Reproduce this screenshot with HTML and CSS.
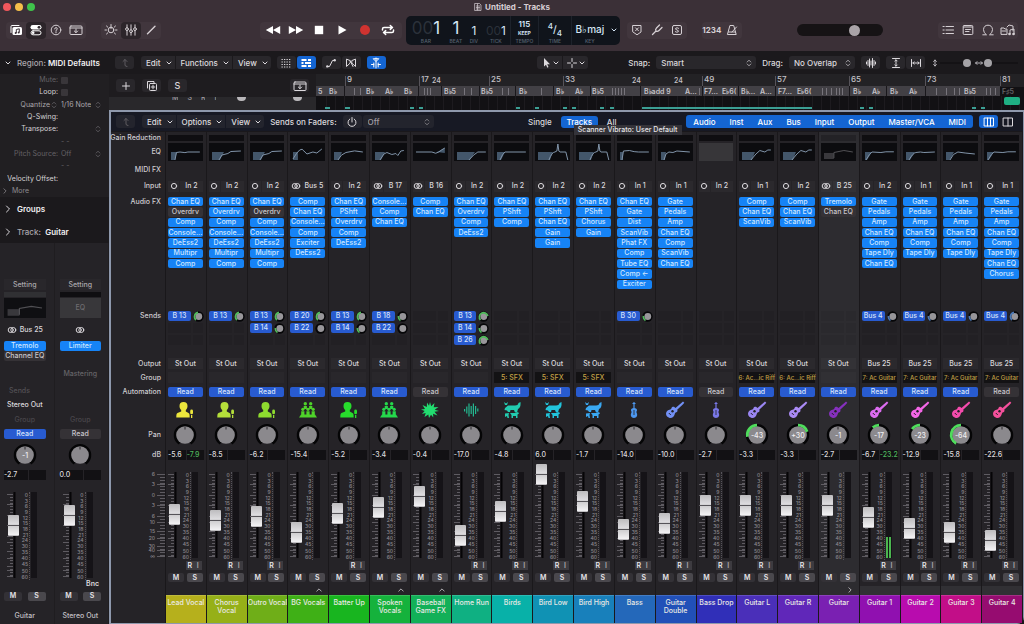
FILE: index.html
```html
<!DOCTYPE html>
<html lang="en">
<head>
<meta charset="utf-8">
<title>Untitled - Tracks</title>
<link rel="stylesheet" href="styles.css">
</head>
<body>
<svg class="defs" aria-hidden="true">
  <symbol id="i-down" viewBox="0 0 8 8"><path d="M2 3l2 2 2-2" class="ln"/></symbol>
  <symbol id="i-updown" viewBox="0 0 8 8"><path d="M2.200 3L4 1.200 5.800 3M2.200 5L4 6.800 5.800 5" class="ln thin"/></symbol>
  <symbol id="i-up" viewBox="0 0 12 12"><path d="M4 4.500L6 2.500l2 2M6 2.500V8q0 1.500 2 1.500" class="ln"/></symbol>
  <symbol id="i-chev" viewBox="0 0 8 8"><path d="M2.500 1L5.500 4 2.500 7" class="ln"/></symbol>
  <symbol id="i-library" viewBox="0 0 14 12"><path d="M2 8.500V2.500Q2 1.500 3 1.500h7" class="ln"/><rect x="3.500" y="3" width="9.500" height="8" rx="1.500" fill="currentColor"/><path d="M7.300 9V5.500l3-.7V8.300" stroke="#3b3037" fill="none"/><circle cx="6.700" cy="9" r="1" fill="#3b3037"/><circle cx="9.700" cy="8.400" r="1" fill="#3b3037"/></symbol>
  <symbol id="i-inspector" viewBox="0 0 14 12"><rect x="1.500" y="1" width="11" height="4.600" rx="2.300" fill="currentColor"/><rect x="2" y="6.800" width="10" height="4" rx="2" class="ln"/><circle cx="10" cy="3.300" r="1.400" fill="#2c252a"/><circle cx="4.200" cy="8.800" r="1.300" fill="currentColor"/></symbol>
  <symbol id="i-help" viewBox="0 0 14 12"><circle cx="7" cy="6" r="4.800" class="ln"/><path d="M5.700 4.900Q5.800 3.600 7 3.600t1.300 1.200Q8.300 5.700 7 6.400v.6M7 8v.8" class="ln"/></symbol>
  <symbol id="i-tray" viewBox="0 0 14 12"><rect x="1" y="2" width="12" height="8.500" rx="1" class="ln"/><path d="M1 4h12M7 5v3.500M5.300 7L7 8.700 8.700 7" class="ln"/></symbol>
  <symbol id="i-smart" viewBox="0 0 14 12"><circle cx="7" cy="6" r="2.800" class="ln"/><path d="M7 .5v4M2.500 2l1.300 1.200M11.500 2l-1.300 1.200M1 6h1.500M11.500 6H13M2.500 10l1.300-1.200M11.500 10l-1.300-1.200" class="ln"/></symbol>
  <symbol id="i-mixer" viewBox="0 0 14 12"><path d="M3 .8v3M3 6.500v4.700M7 .8v5M7 8.500v2.700M11 .8v3M11 6.500v4.700" class="ln"/><circle cx="3" cy="5.100" r="1.400" class="ln"/><circle cx="7" cy="7.200" r="1.400" class="ln"/><circle cx="11" cy="5.100" r="1.400" class="ln"/></symbol>
  <symbol id="i-pencil" viewBox="0 0 14 12"><path d="M3.500 9.800L11 2.200" class="ln" stroke-width="1.400"/></symbol>
  <symbol id="i-rew" viewBox="0 0 16 12"><path d="M8 2v8L.8 6zM15.200 2v8L8 6z" fill="currentColor"/></symbol>
  <symbol id="i-fwd" viewBox="0 0 16 12"><path d="M8 2v8l7.200-4zM.8 2v8L8 6z" fill="currentColor"/></symbol>
  <symbol id="i-stop" viewBox="0 0 12 12"><path d="M1.800 1.800h8.400v8.400H1.800z" fill="currentColor"/></symbol>
  <symbol id="i-play" viewBox="0 0 12 12"><path d="M2.500 1.500v9L10.500 6z" fill="currentColor"/></symbol>
  <symbol id="i-rec" viewBox="0 0 12 12"><circle cx="6" cy="6" r="5" fill="#cf3330"/></symbol>
  <symbol id="i-cycle" viewBox="0 0 14 12"><path d="M1.500 6V5q0-1.500 1.500-1.500h8M9.300 1.500L11.500 3.500 9.300 5.400M12.500 6v1q0 1.500-1.500 1.500H3M4.700 6.600L2.500 8.500l2.200 2" class="ln" stroke-width="1.500"/></symbol>
  <symbol id="i-replace" viewBox="0 0 12 12"><path d="M2 1.500h8v6.500L6 10.800 2 8zM4.500 3.800l3 3M7.500 3.800l-3 3" class="ln"/></symbol>
  <symbol id="i-tuner" viewBox="0 0 12 12"><path d="M1.500 10.500L5 7M5 7q-1-1.500.5-3L8.500 1M5 7q1.500 1 3-.5L11 3.500" class="ln" stroke-width="1.300"/></symbol>
  <symbol id="i-solo" viewBox="0 0 12 12"><rect x="1.500" y="1.500" width="9" height="9" rx="1.500" class="ln"/><path d="M7.600 4.300Q6 3.200 4.800 4.200T6 6t1.200 1.800T4.400 7.700" class="ln"/></symbol>
  <symbol id="i-metro" viewBox="0 0 12 12"><path d="M4.300 1.500h3.400l2.500 9H1.800zM2.500 8h7M6 8l4.500-5" class="ln"/></symbol>
  <symbol id="i-list" viewBox="0 0 12 12"><path d="M4 2.500h7.500M4 6h7.500M4 9.500h7.500M1 2.500h1.200M1 6h1.200M1 9.500h1.200" class="ln"/></symbol>
  <symbol id="i-note" viewBox="0 0 12 12"><rect x="1.200" y="1.500" width="9.600" height="9" rx="1" class="ln"/><path d="M1.500 3h9M3.500 5.500h5M3.500 7.500h3.500" class="ln"/></symbol>
  <symbol id="i-loop" viewBox="0 0 12 12"><path d="M.8 10.800h3.700Q1.500 9 1.500 5.500 2 1.200 6 1.200t4.500 4.300q0 3.500-3 5.300h3.700" class="ln"/></symbol>
  <symbol id="i-media" viewBox="0 0 16 12"><path d="M1 10V4h3l1 1h2v5zM7 3l2-2 4 1v5M2 7h4" class="ln"/><path d="M10 10V6l4-1v5" class="ln"/><circle cx="9.500" cy="10" r="1.300" fill="currentColor"/><circle cx="13.500" cy="10" r="1.300" fill="currentColor"/></symbol>
  <symbol id="i-grid" viewBox="0 0 12 12"><path d="M1.500 2.500h9M1.500 5h9M1.500 7.500h9M1.500 10h9" fill="none" stroke="currentColor" stroke-dasharray="1.300 1.200" stroke-width="1.200"/></symbol>
  <symbol id="i-tracks" viewBox="0 0 12 12"><path d="M1.500 3h5M8 3h3M1.500 6h2M5 6h6M1.500 9h5M8 9h3" fill="none" stroke="currentColor" stroke-width="1.800"/></symbol>
  <symbol id="i-auto" viewBox="0 0 12 12"><path d="M2.500 9.500h2l3-6h2" class="ln"/><circle cx="2.300" cy="9.400" r="1.200" fill="currentColor"/><circle cx="9.700" cy="3.300" r="1.200" fill="currentColor"/></symbol>
  <symbol id="i-flex" viewBox="0 0 12 12"><path d="M1.500 2.500v7L5.200 6V4zM10.500 2.500v7L6.800 6V4zM5.200 4L8 9.500M6.800 4" class="ln"/></symbol>
  <symbol id="i-catch" viewBox="0 0 12 12"><path d="M6 1v10M3.500 2L6 4.500 8.500 2zM1.500 7.500h2.300M8.200 7.500h2.300M3.800 6v4M8.200 6v4" class="ln"/></symbol>
  <symbol id="i-pointer" viewBox="0 0 12 12"><path d="M4 1v8.500l2-1.800 1.300 3 1.200-.6L7.200 7.300H10z" fill="currentColor"/></symbol>
  <symbol id="i-cross" viewBox="0 0 12 12"><path d="M6 1.500v3M6 7.500v3M1.500 6h3M7.500 6h3" class="ln"/></symbol>
  <symbol id="i-wave" viewBox="0 0 12 12"><path d="M1.500 5v2M3 3.500v5M4.500 2v8M6 4v4M7.500 1.500v9M9 3.500v5M10.500 5v2" class="ln"/></symbol>
  <symbol id="i-vfit" viewBox="0 0 12 12"><path d="M2.500 1.500h7M2.500 10.500h7M6 3v6M4.800 4L6 2.800 7.200 4M4.800 8L6 9.200 7.200 8" class="ln"/></symbol>
  <symbol id="i-hfit" viewBox="0 0 12 12"><path d="M1.500 2.500v7M10.500 2.500v7M3 6h6M4 4.800L2.800 6 4 7.200M8 4.800L9.200 6 8 7.200" class="ln"/></symbol>
  <symbol id="i-varr" viewBox="0 0 8 8"><path d="M4 1v6M2.600 2.400L4 1l1.400 1.400M2.600 5.600L4 7l1.400-1.400" class="ln"/></symbol>
  <symbol id="i-harr" viewBox="0 0 8 8"><path d="M.6 4h6.800M2 2.600L.6 4 2 5.400M6 2.600L7.400 4 6 5.400" class="ln"/></symbol>
  <symbol id="i-plus" viewBox="0 0 12 12"><path d="M6 2.500v7M2.500 6h7" class="ln"/></symbol>
  <symbol id="i-dup" viewBox="0 0 12 12"><path d="M1.500 8V1.500H8V3" class="ln"/><rect x="3.500" y="3.500" width="7" height="7" rx="1" class="ln"/><path d="M7 5.200v3.600M5.200 7h3.600" class="ln"/></symbol>
  <symbol id="i-power" viewBox="0 0 12 12"><path d="M6 1.500V6M3.800 3A4 4 0 1 0 8.200 3" class="ln"/></symbol>
  <symbol id="i-three" viewBox="0 0 12 12"><path d="M1.500 2h9v8h-9zM4.500 2v8M7.500 2v8" class="ln"/></symbol>
  <symbol id="i-two" viewBox="0 0 12 12"><path d="M1.500 2h9v8h-9zM6 2v8" class="ln"/></symbol>
  <symbol id="i-mono" viewBox="0 0 10 8"><circle cx="5" cy="4" r="2.600" class="ln"/></symbol>
  <symbol id="i-stereo" viewBox="0 0 10 8"><circle cx="3.700" cy="4" r="2.500" class="ln"/><circle cx="6.300" cy="4" r="2.500" class="ln"/></symbol>
  <symbol id="i-doc" viewBox="0 0 8 8"><path d="M1 .5h4.500L7 2v5.500H1zM2.300 3h3.400M2.300 4.500h3.400M2.300 6h3.400M3.500 1v6" class="ln thin"/></symbol>

  <symbol id="t-singer" viewBox="0 0 20 18"><path d="M8.500 1C5.800 1 4.500 2.600 4.500 5c0 1.700.6 3 1.700 3.900v1.500L2.500 12C1.600 12.500 1.300 13.500 1.300 16.500h13.400c0-3-.2-4-1.200-4.500l-2.700-1.600V8.900C11.900 8 12.500 6.700 12.500 5c0-2.400-1.300-4-4-4z"/><rect x="15.200" y="8.500" width="2.800" height="4.800" rx="1.400"/><path d="M16 14h1.300v3H16z"/></symbol>
  <symbol id="t-choir" viewBox="0 0 20 18"><circle cx="7.300" cy="2.800" r="1.700"/><circle cx="12.700" cy="2.800" r="1.700"/><path d="M5.700 5h3.200v3H5.700zM11.100 5h3.200v3h-3.200z"/><circle cx="4.800" cy="8.300" r="1.600"/><circle cx="10" cy="8.300" r="1.600"/><circle cx="15.200" cy="8.300" r="1.600"/><path d="M3.200 10.200h3.200V14H3.200zM8.400 10.200h3.200V14H8.400zM13.600 10.200h3.200V14h-3.200zM3 13.500h14l2 3H1z"/></symbol>
  <symbol id="t-burst" viewBox="0 0 20 18"><path d="M10 1l1.200 4.200L14.500 2l-.8 4.300L18.500 6l-3.800 2.700L19 10l-4.500.8 3 3.700-4.400-1.700.2 3.700-2.300-2.800L9 17l-.7-3.600L4.500 16l1.200-4L2 13l2.600-3L1 8.500l4-.6L2.500 4l4.300 2L7 1.500l2 3.200z"/></symbol>
  <symbol id="t-wave" viewBox="0 0 20 18"><path d="M3 8h1.200v2.500H3zM5.200 5.500h1.200v7H5.200zM7.400 2.500h1.200v13H7.400zM9.600 5h1.200v8H9.600zM11.800 2.500H13v13h-1.200zM14 5h1.200v8H14zM16.200 7.500h1.200v3h-1.200z"/></symbol>
  <symbol id="t-zoo" viewBox="0 0 20 18"><path d="M2 1l2 1.500L6 1 5 4H3zM3 7l3-2.500h7q3 0 3.500-2.500L18.500 1q.5 6-2.500 7l-1 3.500h-2L12 9H8.500l-.5 2H6L5 9.500 2.500 9zM8 12h6l2-1 1 1.500-1.500 1V17H14v-2h-3v2H9.500v-3zM3 12.500l4-.5-.5 2 .5 3H5.500L5 15l-2 1z"/></symbol>
  <symbol id="t-violin" viewBox="0 0 20 18"><path d="M9.400 1h1.200v6.500h-1.200zM8.500 2h3v1h-3z"/><path d="M10 7c2 0 3.300 1 3 2.600-.2 1-.9 1.200-.4 2.200C14 14.500 12.800 17 10 17s-4-2.500-2.600-5.200c.5-1-.2-1.200-.4-2.200C6.700 8 8 7 10 7z"/><path d="M10 9v5" stroke="#232125" stroke-width=".8"/></symbol>
  <symbol id="t-guitar" viewBox="0 0 20 18"><path d="M18 .5l1.300 1.200-1.500 1.800-5.600 5.200c.7 1.200.2 2.200-1 2.600-1 .4-1.200.8-1.500 2-.6 2.400-2.700 4-5 3.600C2.700 16.500 1 15 1 12.800c0-2.100 1.300-3.700 3.500-4.100 1.200-.2 1.500-.5 1.900-1.500.6-1.300 2-1.800 3.200-1l.9.700 5.800-5z"/><circle cx="7.500" cy="10.200" r="1.200" fill="#232125"/><path d="M3.800 12l2 2" stroke="#232125"/></symbol>
</svg>

<div class="app">
  <header class="titlebar">
    <div class="title-row">
      <div class="lights"><button class="light red" aria-label="Close"></button><button class="light amber" aria-label="Minimise"></button><button class="light green" aria-label="Zoom"></button></div>
      <h1><svg class="s8"><use href="#i-doc"/></svg>Untitled - Tracks</h1>
    </div>
    <div class="control-bar">
      <div class="group">
        <button class="lit" aria-label="Library"><svg class="w14"><use href="#i-library"/></svg></button>
        <button class="lit pressed" aria-label="Inspector"><svg class="w14"><use href="#i-inspector"/></svg></button>
        <button aria-label="Help"><svg class="w14"><use href="#i-help"/></svg></button>
        <button aria-label="Toolbar"><svg class="w14"><use href="#i-tray"/></svg></button>
      </div>
      <div class="group second">
        <button aria-label="Smart controls"><svg class="w14"><use href="#i-smart"/></svg></button>
        <button class="pressed" aria-label="Mixer"><svg class="w14"><use href="#i-mixer"/></svg></button>
        <button aria-label="Editors"><svg class="w14"><use href="#i-pencil"/></svg></button>
      </div>
      <div class="gap-a"></div>
      <div class="group transport">
        <button aria-label="Rewind"><svg class="w16"><use href="#i-rew"/></svg></button>
        <button aria-label="Forward"><svg class="w16"><use href="#i-fwd"/></svg></button>
        <button aria-label="Stop"><svg class="w12"><use href="#i-stop"/></svg></button>
        <button aria-label="Play"><svg class="w12"><use href="#i-play"/></svg></button>
        <button aria-label="Record"><svg class="w12"><use href="#i-rec"/></svg></button>
        <button aria-label="Cycle"><svg class="w14"><use href="#i-cycle"/></svg></button>
      </div>
      <div class="lcd">
        <div class="cell bar"><b class="big"><i>00</i>1</b><small>BAR</small></div>
        <div class="cell beat"><b class="big">1</b><small>BEAT</small></div>
        <div class="cell div"><b class="mid">1</b><small>DIV</small></div>
        <div class="cell tick"><b class="mid"><i>00</i>1</b><small>TICK</small></div>
        <div class="cell tempo"><b class="tiny">115</b><em>KEEP</em><small>TEMPO</small></div>
        <div class="cell time"><b class="sig"><sup>4</sup>/<sub>4</sub></b><small>TIME</small></div>
        <div class="cell key"><b class="sig">B♭maj</b><small>KEY</small></div>
        <button aria-label="Display mode"><svg class="s8"><use href="#i-down"/></svg></button>
      </div>
      <div class="group modes">
        <button aria-label="Replace"><svg class="w12"><use href="#i-replace"/></svg></button>
        <button aria-label="Tuner"><svg class="w12"><use href="#i-tuner"/></svg></button>
        <button aria-label="Solo"><svg class="w12"><use href="#i-solo"/></svg></button>
      </div>
      <div class="group count">
        <button>1234</button>
        <button aria-label="Metronome"><svg class="w12"><use href="#i-metro"/></svg></button>
      </div>
      <div class="gap-b"></div>
      <input class="volume" type="range" min="0" max="100" value="70" aria-label="Master volume">
      <div class="gap-b"></div>
      <div class="group">
        <button aria-label="List editors"><svg class="w12"><use href="#i-list"/></svg></button>
        <button aria-label="Note pad"><svg class="w12"><use href="#i-note"/></svg></button>
        <button aria-label="Loop browser"><svg class="w12"><use href="#i-loop"/></svg></button>
        <button aria-label="Media browser"><svg class="w16"><use href="#i-media"/></svg></button>
      </div>
    </div>
  </header>

  <div class="work">
    <aside class="inspector">
      <button class="head"><svg class="s8"><use href="#i-down"/></svg><span>Region: <strong>MIDI Defaults</strong></span></button>
      <div class="params">
        <div class="param dim"><label for="mute">Mute:</label><input id="mute" type="checkbox"></div>
        <div class="param"><label for="loop">Loop:</label><input id="loop" type="checkbox"></div>
        <div class="param soft"><label for="quant">Quantize<svg class="s8"><use href="#i-updown"/></svg></label><select id="quant"><option>1/16 Note</option></select><svg class="s8"><use href="#i-updown"/></svg></div>
        <div class="param"><span>Q-Swing:</span></div>
        <div class="param"><span>Transpose:</span><i></i><svg class="s8"><use href="#i-updown"/></svg></div>
        <div class="param dim"><span></span><i>- -</i></div>
        <div class="param dim"><label for="pitch">Pitch Source:</label><select id="pitch"><option>Off</option></select><svg class="s8"><use href="#i-updown"/></svg></div>
        <div class="param dim"><span></span><i>- -</i></div>
        <div class="param"><span>Velocity Offset:</span></div>
        <button class="more"><svg class="s8"><use href="#i-chev"/></svg>More</button>
      </div>
      <button class="head fold"><svg class="s8"><use href="#i-chev"/></svg><strong>Groups</strong></button>
      <button class="head fold"><svg class="s8"><use href="#i-chev"/></svg><span>Track: &nbsp;<strong>Guitar</strong></span></button>
      <div class="duo" id="duo"></div>
    </aside>

    <main class="main">
      <section class="tracks">
        <div class="toolbar">
          <button class="tb ghost" aria-label="Up"><svg class="w12"><use href="#i-up"/></svg></button>
          <div class="menus"><button>Edit<svg class="s8"><use href="#i-down"/></svg></button><button>Functions<svg class="s8"><use href="#i-down"/></svg></button><button>View<svg class="s8"><use href="#i-down"/></svg></button></div>
          <div class="pair"><button class="tb" aria-label="Grid"><svg class="w12"><use href="#i-grid"/></svg></button><button class="tb on" aria-label="Tracks view"><svg class="w12"><use href="#i-tracks"/></svg></button></div>
          <div class="pair"><button class="tb" aria-label="Automation"><svg class="w12"><use href="#i-auto"/></svg></button><button class="tb" aria-label="Flex"><svg class="w12"><use href="#i-flex"/></svg></button></div>
          <button class="tb on" aria-label="Catch playhead"><svg class="w12"><use href="#i-catch"/></svg></button>
          <div class="gap-c"></div>
          <div class="menus tools"><button aria-label="Left click tool"><svg class="w12"><use href="#i-pointer"/></svg><svg class="s8"><use href="#i-down"/></svg></button><button aria-label="Command click tool"><svg class="w12"><use href="#i-cross"/></svg><svg class="s8"><use href="#i-down"/></svg></button></div>
          <div class="gap-d"></div>
          <label for="snap">Snap:</label>
          <span class="pop snap"><select id="snap"><option>Smart</option></select><svg class="s8"><use href="#i-updown"/></svg></span>
          <label for="drag">Drag:</label>
          <span class="pop drag"><select id="drag"><option>No Overlap</option></select><svg class="s8"><use href="#i-updown"/></svg></span>
          <button class="tb" aria-label="Waveform zoom"><svg class="w12"><use href="#i-wave"/></svg></button>
          <div class="pair"><button class="tb" aria-label="Fit vertically"><svg class="w12"><use href="#i-vfit"/></svg></button><button class="tb" aria-label="Fit horizontally"><svg class="w12"><use href="#i-hfit"/></svg></button></div>
          <div class="zooms"><svg class="s8"><use href="#i-varr"/></svg><input type="range" value="90" aria-label="Vertical zoom"><svg class="s8"><use href="#i-harr"/></svg><input type="range" value="0" aria-label="Horizontal zoom"></div>
        </div>
        <div class="arrange">
          <div class="headers">
            <div class="header-tools">
              <button class="tb" aria-label="Add track"><svg class="w12"><use href="#i-plus"/></svg></button>
              <button class="tb" aria-label="Duplicate track"><svg class="w12"><use href="#i-dup"/></svg></button>
              <button class="tb">S</button>
              <button class="tb last" aria-label="Global tracks"><svg class="w14"><use href="#i-tray"/></svg></button>
            </div>
            <div class="cut-track"><span>M</span><span>S</span><span>R</span><span>I</span><b></b><b></b></div>
          </div>
          <svg class="timeline" id="timeline" viewBox="0 0 708 36" preserveAspectRatio="none"></svg>
        </div>
      </section>

      <section class="mixer">
        <div class="toolbar">
          <button class="tb ghost" aria-label="Up"><svg class="w12"><use href="#i-up"/></svg></button>
          <div class="menus"><button>Edit<svg class="s8"><use href="#i-down"/></svg></button><button>Options<svg class="s8"><use href="#i-down"/></svg></button><button>View<svg class="s8"><use href="#i-down"/></svg></button></div>
          <label for="sof">Sends on Faders:</label>
          <div class="pair"><button class="tb" aria-label="Sends on faders power"><svg class="w12"><use href="#i-power"/></svg></button><span class="pop sof"><select id="sof"><option>Off</option></select><svg class="s8"><use href="#i-updown"/></svg></span></div>
          <div class="gap-e"></div>
          <div class="views"><button>Single</button><div class="tipped"><button class="on">Tracks</button><div class="tooltip" role="tooltip">Scanner Vibrato: User Default</div></div><button>All</button></div>
          <div class="gap-f"></div>
          <div class="filters"><button>Audio</button><button>Inst</button><button>Aux</button><button>Bus</button><button>Input</button><button>Output</button><button>Master/VCA</button><button>MIDI</button></div>
          <div class="pair"><button class="tb on" aria-label="Narrow strips"><svg class="w12"><use href="#i-three"/></svg></button><button class="tb plain" aria-label="Wide strips"><svg class="w12"><use href="#i-two"/></svg></button></div>
        </div>
        <div class="board">
          <div class="legend">
            <div class="r-gr">Gain Reduction</div>
            <div class="r-eq">EQ</div>
            <div class="r-midi">MIDI FX</div>
            <div class="r-input">Input</div>
            <div class="r-fx">Audio FX</div>
            <div class="r-sends">Sends</div>
            <div class="r-out">Output</div>
            <div class="r-group">Group</div>
            <div class="r-auto">Automation</div>
            <div class="r-icon"></div>
            <div class="r-pan">Pan</div>
            <div class="r-db">dB</div>
            <div class="r-fader" id="scale"></div>
          </div>
          <div class="strips" id="strips"></div>
        </div>
      </section>
    </main>
  </div>
</div>
<script src="mixer.js"></script>
</body>
</html>
```
FILE: styles.css
```css
* { box-sizing: border-box; }

body {
  margin: 0;
  background: #1a181b;
  color: #dcd9dd;
  font: 500 8px/10px Inter, "Liberation Sans", sans-serif;
}

button, select, input { font: inherit; color: inherit; margin: 0; }
button { border: 0; padding: 0; background: none; display: flex; align-items: center; justify-content: center; white-space: nowrap; }
select { appearance: none; border: 0; background: none; padding: 0; flex: 1; min-width: 0; }
i, em { font-style: normal; }
svg { display: block; flex: none; }
.defs { position: absolute; width: 0; height: 0; }
.ln { fill: none; stroke: currentColor; stroke-linecap: round; stroke-linejoin: round; }
.thin { stroke-width: 1px; opacity: .7; }
.s8 { width: 8px; height: 8px; }
.w12 { width: 12px; height: 12px; }
.w14 { width: 14px; height: 12px; }
.w16 { width: 16px; height: 12px; }

.app { min-height: 100vh; display: flex; flex-direction: column; }

/* Title and control bar */
.titlebar { background: #3b3037; height: 51px; }
.title-row { display: grid; grid-template-columns: 1fr auto 1fr; align-items: center; height: 13px; }
.title-row h1 { margin: 0; font-size: 8px; font-weight: 700; display: flex; gap: 3px; align-items: center; color: #d6cdd3; }
.lights { display: flex; gap: 4px; padding-left: 3px; }
.light { width: 8px; height: 8px; border-radius: 50%; }
.red { background: #f0575c; }
.amber { background: #f5bf4a; }
.green { background: #3fc34b; }

.control-bar { display: flex; align-items: center; height: 34px; padding: 0 6px; }
.group { display: flex; align-items: center; height: 17px; border-radius: 4px; background: #41363d; color: #d6d0d4; }
.group button { width: 20px; height: 17px; border-radius: 4px; }
.group .pressed { background: #2c252a; }
.group .lit { color: #fff; }
.second { margin-left: 15px; }
.transport { color: #fff; margin-right: 4px; padding: 0 2px; }
.transport button { width: 23px; }
.modes { margin-left: 7px; }
.count { margin-left: 15px; font-weight: 700; }
.gap-a { flex: 97; }
.gap-b { flex: 54; }

.lcd { display: flex; height: 29px; border-radius: 5px; background: #10141b; color: #d5e6f5; }
.cell { display: flex; flex-direction: column; align-items: center; justify-content: flex-end; padding-bottom: 1px; }
.cell b { font-weight: 400; }
.cell i { color: #2b313a; }
.cell small { font-size: 5px; line-height: 6px; color: #56606e; }
.cell em { font-size: 5px; line-height: 6px; font-weight: 700; margin: 1px 0 2px; }
.big { font-size: 17px; line-height: 20px; }
.mid { font-size: 12px; line-height: 14px; }
.cell .tiny { font-size: 8px; line-height: 9px; font-weight: 600; }
.cell .sig { font-size: 10px; line-height: 18px; font-weight: 500; }
.sig sup, .sig sub { font-size: 8px; line-height: 8px; }
.bar { width: 40px; }
.beat { width: 20px; }
.div { width: 16px; }
.tick { width: 28px; }
.tempo { width: 28px; }
.time { width: 33px; }
.key { width: 37px; }
.tempo, .time, .key { border-left: 1px solid #1d222b; }
.lcd button { width: 12px; }

input[type=range] { appearance: none; background: none; }
.control-bar .volume { width: 86px; height: 12px; border-radius: 6px; background: #161315; }
.volume::-webkit-slider-thumb { appearance: none; width: 11px; height: 11px; border-radius: 50%; background: #a9a3a7; }

.work { display: flex; flex: 1; }

/* Inspector */
.inspector { width: 109px; flex: none; background: #1b191c; display: flex; flex-direction: column; }
.head { height: 23px; justify-content: flex-start; gap: 5px; padding-left: 4px; color: #aaa6ac; }
.head strong { font-weight: 600; color: #f0eef1; }
.head .s8 { color: #dcd9dd; }
.head.fold { height: 23px; }
.params { height: 123px; display: grid; grid-template-rows: repeat(10, 1fr); font-size: 7px; line-height: 8px; font-weight: 400; background: #211f22; }
.param { display: grid; grid-template-columns: 58px 1fr 10px; column-gap: 3px; align-items: center; padding-right: 5px; color: #d6d3d7; }
.param > :first-child { display: flex; justify-content: flex-end; align-items: center; }
.param svg { color: #716e73; }
.param.soft { color: #a9a6ab; }
.param.dim { color: #656267; }
.param input { appearance: none; width: 7px; height: 7px; background: #39363a; border-radius: 1px; }
.more { justify-content: flex-start; gap: 4px; padding-left: 2px; color: #8e8b90; }
.more svg { width: 6px; height: 6px; }

.duo { flex: 1; display: grid; grid-template-columns: 1fr 1fr; background: #252327; }
.chan { padding: 36px 8px 0 4px; border-right: 1px solid #1f1d20; font-size: 7px; line-height: 8px; display: flex; flex-direction: column; }
.chan + .chan { padding: 36px 7px 0 5px; }
.chan .setting { height: 11px; background: #29272b; color: #aaa7ac; }
.chan .gr { height: 5px; margin: 2px 0 1px; background: #303033; }
.chan + .chan .gr { background: #0f0e11; }
.chan .eqbox { height: 20px; }
.chan .eqbox svg { width: 100%; height: 100%; background: #0f0f12; }
.chan .noeq { height: 20px; width: 100%; background: #38373a; color: #6e6c70; }
.chan .c-input { height: 23px; display: flex; align-items: center; justify-content: center; gap: 3px; }
.chan .c-fx { height: 44px; }
.chan .c-fx button { width: 100%; height: 10px; }
.chan .c-fx .master { margin-top: 18px; color: #666368; }
.chan .c-row { height: 14px; display: flex; align-items: center; justify-content: center; }
.chan .faint { color: #49464b; }
.chan .c-sends { height: 11px; justify-content: flex-start; padding-left: 5px; color: #535055; }
.chan .c-out { height: 17px; }
.chan .r-pan { height: 27px; }
.chan .r-fader { flex: none; padding-left: 3px; }
.chan .c-bnc { height: 9px; text-align: right; padding-right: 2px; font-weight: 600; }
.chan .r-ms { height: 14px; }
.chan .r-ms button { width: 18px; }
.chan .c-name { margin-top: 9px; text-align: center; white-space: nowrap; color: #c3c0c5; }

/* Tracks area */
.main { flex: 1; min-width: 0; display: flex; flex-direction: column; }
.toolbar { display: flex; align-items: center; height: 23px; padding: 0 6px; gap: 6px; white-space: nowrap; }
.toolbar .tb, .header-tools .tb { width: 19px; height: 13px; border-radius: 3px; background: #29272b; }
.toolbar .ghost { color: #5e5b60; margin-right: 1px; }
.toolbar .on, .views .on { background: #1465d2; color: #fff; }
.menus { display: flex; gap: 1px; }
.menus button { height: 13px; background: #29272b; padding: 0 2px 0 5px; gap: 4px; }
.menus button:first-child { border-radius: 3px 0 0 3px; }
.menus button:last-child { border-radius: 0 3px 3px 0; }
.tools button { width: 25px; padding: 0; gap: 0; }
.pair { display: flex; gap: 1px; }
.pop { display: flex; align-items: center; height: 13px; padding: 0 3px 0 5px; background: #29272b; border-radius: 3px; }
.snap { width: 100px; }
.drag { width: 66px; }
.sof { width: 71px; color: #a19ea3; }
.gap-c { flex: 148; }
.gap-d { flex: 30; }
.gap-e { flex: 80; }
.gap-f { flex: 56; }
.zooms { display: flex; align-items: center; gap: 1px; color: #b9b6bb; }
.zooms input { width: 34px; height: 8px; background: linear-gradient(#141215, #141215) center / 100% 2px no-repeat; }
.zooms input::-webkit-slider-thumb { appearance: none; width: 8px; height: 8px; border-radius: 50%; background: #a5a3a7; }

.tracks .toolbar { background: #1b191c; }
.arrange { display: flex; height: 36px; }
.headers { width: 207px; flex: none; }
.header-tools { display: flex; align-items: center; gap: 7px; height: 23px; padding: 0 7px; background: #1e1c1f; font-size: 9px; }
.header-tools .last { margin-left: auto; }
.cut-track { height: 13px; background: #29282b; display: flex; gap: 9px; padding-left: 63px; overflow: hidden; font-size: 7px; line-height: 4px; align-items: flex-start; color: #a19ea3; }
.cut-track span { height: 3px; display: flex; align-items: flex-end; overflow: hidden; }
.cut-track b { width: 9px; height: 4px; border-radius: 0 0 9px 9px; background: #b9b7ba; margin-left: 12px; }
.cut-track b + b { margin-left: 38px; }
.timeline { flex: 1; min-width: 0; height: 36px; background: #121114; font-size: 8px; }
.timeline text { fill: #c6c3c8; font-weight: 500; }
.timeline .tempo-mark { font-size: 7px; }
.timeline .chord { font-size: 7px; font-weight: 600; }
.timeline .blk { fill: #424045; }
.timeline .line { stroke: #57545a; }

/* Mixer */
.mixer { flex: 1; display: flex; flex-direction: column; border: solid #8e98ac; border-width: 2px 1px 1px 2px; border-radius: 0 0 7px 0; background: #252327; }
.mixer .toolbar { height: 19px; background: #171924; padding: 0 7px 0 5px; }
.mixer .tb, .mixer .menus button, .mixer .pop { background: #23242d; }
.mixer .toolbar .on { background: #1465d2; }
.mixer .toolbar .plain { background: none; width: 17px; }
.mixer .filters { display: flex; background: #1465d2; color: #fff; border-radius: 3px; }
.filters button { height: 13px; padding: 0 7px; }
.views { display: flex; gap: 9px; align-items: center; }
.views button { height: 12px; }
.views .on { width: 37px; border-radius: 3px; }
.tipped { position: relative; }
.tooltip { position: absolute; left: 13px; top: 9px; z-index: 5; padding: 0 4px; font-size: 7px; line-height: 10px; background: #343339; color: #e6e4e8; }

.board { flex: 1; display: flex; }
.legend { width: 54px; flex: none; display: flex; flex-direction: column; font-size: 7px; text-align: right; border-top: 1px solid #1a181b; }
.legend > div { display: flex; align-items: center; justify-content: flex-end; padding-right: 4px; white-space: nowrap; color: #cfccd1; }
.legend > .r-fx { align-items: flex-start; padding-top: 3px; }
.legend > .r-sends { align-items: flex-start; padding-top: 3px; }
.legend > .r-fader { padding: 0; flex: none; }

.strips { flex: 1; min-width: 0; display: grid; grid-template-columns: repeat(21, minmax(0, 1fr)); border-left: 1px solid #19171a; }
.strip { min-width: 0; display: flex; flex-direction: column; border-right: 1px solid #1a181b; border-top: 1px solid #1a181b; font-size: 7px; line-height: 8px; }
.strip > div { padding-left: 2px; padding-right: 3px; }
.strip.picked { background: #2d2c30; }

.r-gr { height: 11px; }
.r-eq { height: 18px; }
.r-midi { height: 17px; }
.r-input { height: 16px; }
.r-fx { height: 114px; }
.r-sends { height: 48px; }
.r-out { height: 15px; }
.r-group { height: 13px; }
.r-auto { height: 15px; }
.r-icon { height: 22px; }
.r-pan { height: 27px; }
.r-db { height: 14px; }
.r-fader { height: 98px; }
.r-ri { height: 11px; }
.r-ms { height: 13px; }
.r-fold { height: 11px; }
.r-name { flex: 1; min-height: 28px; }

.strip .r-gr span { display: block; height: 6px; margin-top: 3px; background: #0f0e11; }
.strip .r-eq svg { width: 100%; height: 18px; background: #0c0c0f; }
.strip .r-eq .off { display: block; height: 18px; background: #373639; }
.strip.picked .r-gr span { background: #232226; }
.curve { fill: none; stroke: #8295aa; }
.area { fill: #43566a; }
.grey .curve { stroke: #515054; }
.grey .area { fill: #39383c; }

.strip .r-input, .strip .r-out, .strip .r-group, .strip .r-auto, .r-db { display: flex; align-items: center; gap: 1px; }
.r-input button { height: 11px; background: rgba(255,255,255,.03); flex: 1; }
.r-input .fmt { flex: none; width: 11px; }
.fmt svg, .c-input svg { width: 10px; height: 8px; }
.strip .r-fx { padding-top: 3px; }
.slots { display: grid; grid-template-rows: repeat(9, 1fr); height: 92px; row-gap: 1px; }
.fx { background: #1683f6; color: #cfe6ff; border-radius: 2px; min-width: 0; overflow: hidden; height: 100%; }
.fx.off { background: #353236; color: #c9c6cb; }
.strip .r-sends { padding-top: 3px; padding-right: 2px; display: flex; flex-direction: column; gap: 2px; }
.send { height: 10px; display: flex; align-items: center; gap: 2px; flex: none; }
.send button { width: 23px; height: 10px; border-radius: 2px; background: #285bd0; color: #d6e2fa; }
.send svg { width: 11px; height: 11px; }
.send.empty span { height: 10px; width: 23px; background: rgba(0,0,0,.06); }
.send.empty span + span { width: 10px; }
.r-out button { width: 100%; height: 11px; background: rgba(255,255,255,.03); }
.r-group button { width: 100%; height: 11px; background: rgba(255,255,255,.02); }
.r-group .set { background: #131214; color: #c3a045; }
.r-group .long { font-size: 6px; }
.read { width: 100%; height: 10px; border-radius: 2px; background: #285bd0; color: #d6e2fa; }
.read.off { background: #353236; color: #c9c6cb; }
.strip .r-icon { display: flex; align-items: center; justify-content: center; }
.r-icon svg { width: 20px; height: 18px; fill: currentColor; }
.strip .r-pan, .chan .r-pan { display: flex; align-items: center; justify-content: center; }
.r-pan svg { width: 24px; height: 24px; }
.r-pan text { font-size: 7px; fill: #f0eef1; text-anchor: middle; }
.strip .r-db { padding-right: 2px; }
.strip .r-db span, .chan .r-db span { flex: 1 0 auto; min-width: 17px; height: 10px; line-height: 10px; background: #121114; white-space: nowrap; }
.strip .r-db .peak { color: #4fb45c; }
.legend .r-db { gap: 0; }

.lane { display: grid; grid-template-columns: 12px 12px 6px; height: 98px; }
.lane > * { grid-row: 1; }
.ticks { grid-column: 1; width: 12px; height: 98px; stroke: #77747a; }
.ticks .groove { stroke: #060507; stroke-width: 2; }
.fader { grid-column: 1; writing-mode: vertical-lr; direction: rtl; width: 11px; height: 96px; margin: 1px 0 1px 1px; }
.fader::-webkit-slider-runnable-track { background: none; }
.fader::-webkit-slider-thumb { appearance: none; width: 11px; height: 21px; border-radius: 1px; background: linear-gradient(#bdbcbe 0, #dddcdf 9px, #c9c8ca 10px, #555358 10px, #555358 11px, #cfced0 11px, #f3f2f4 20px, #8e8c90 21px); }
.nums { grid-column: 2; margin: 10px 1px 0 0; display: grid; grid-template-rows: repeat(9, 11fr) repeat(6, 12fr); font-size: 5px; line-height: 6px; text-align: right; color: #8b888e; border-right: 1px dotted #56535a; padding-right: 1px; }
.nums span { min-height: 0; height: 0; }
.meter { grid-column: 3; margin: 10px 0 2px 0; background: #151317; display: flex; align-items: flex-end; gap: 1px; justify-content: center; }
.meter i { width: 2px; height: 24%; background: #4bb64f; }
.outer { width: 54px; height: 98px; stroke: #77747a; }
.outer text { font-size: 5px; fill: #8b888e; stroke: none; text-anchor: end; }

.strip .r-ri { display: flex; justify-content: flex-end; align-items: center; padding-right: 4px; }
.r-ri button { width: 8px; height: 9px; background: #3d3b40; color: #e6e4e8; font-weight: 600; }
.r-ri button + button { color: #a9a6ab; }
.r-ms { display: flex; align-items: center; justify-content: space-between; }
.r-ms button { width: 16px; height: 9px; border-radius: 2px; background: #333136; color: #e6e4e8; font-size: 7px; font-weight: 600; }
.r-ms button + button { background: #4a484d; }
.strip .r-fold { display: flex; align-items: center; justify-content: flex-end; }
.r-fold svg { width: 6px; height: 6px; margin-right: 3px; }
.r-fold .up svg { transform: rotate(-90deg); }
.strip.child .r-fold { background: linear-gradient(#252327 2px, #313034 2px); }
.strip .r-name { padding: 3px 0 0; text-align: center; color: #e9e9e4; overflow: hidden; border-top: 1px solid rgba(255,255,255,.15); }
.strip:first-child .r-name, .strip:nth-child(3) .r-name { white-space: nowrap; }
```
FILE: mixer.js
```js
const CH = 'Chan EQ', CO = 'Comp', CS = 'Console...', OV = 'Overdrv', DE = 'DeEss2', PS = 'PShft', SV = 'ScanVib';
const AMP = ['Gate', 'Pedals', 'Amp', CH, CO, 'Tape Dly'];

/* A leading "-" on a plug-in name marks a bypassed slot. */
const channels = [
  { n: 'Lead Vocal', c: '#b6b01c', k: '#ece63c', i: 'singer', in: 'In 2', eq: 0, fx: [CH, '-' + OV, CO, CS, DE, 'Multipr', CO], s: [['B 13', -60]], db: '-5.6', pk: '-7.9', y: 514, ri: 1 },
  { n: 'Chorus Vocal', c: '#96b018', k: '#b4de3a', i: 'singer', in: 'In 2', eq: 1, fx: [CH, OV, CO, CS, DE, 'Multipr', CO], s: [['B 13', -60]], db: '-8.5', y: 520, ri: 1 },
  { n: 'Outro Vocal', c: '#6fae18', k: '#8edb2f', i: 'singer', in: 'In 2', eq: 1, fx: [CH, '-' + OV, CO, CS, DE, 'Multipr', CO], s: [['B 13', -60], ['B 14', -95]], db: '-6.2', y: 516, ri: 1 },
  { n: 'BG Vocals', c: '#3fb016', k: '#4fd22a', i: 'choir', in: 'Bus 5', st: 1, eq: 2, fx: [CO, CH, CS, CO, 'Exciter', DE], s: [['B 20', -60], ['B 22', 0]], db: '-15.4', y: 533, up: 1 },
  { n: 'Batter Up', c: '#18b51f', k: '#27dc2c', i: 'singer', in: 'In 2', eq: 3, fx: [CH, PS, OV, CO, DE], s: [['B 13', -60], ['B 14', -120]], db: '-5.2', y: 513, ri: 1 },
  { n: 'Spoken Vocals', c: '#15b23c', k: '#25d84c', i: 'choir', in: 'B 17', st: 1, eq: 4, fx: [CS, CO, CH], s: [['B 18', -100], ['B 22', 0]], db: '-3.4', y: 507, up: 1 },
  { n: 'Baseball Game FX', c: '#12b058', k: '#22dd70', i: 'burst', in: 'B 16', st: 1, eq: 5, fx: [CO, CH], db: '-0.4', y: 496, up: 1, ro: 1 },
  { n: 'Home Run', c: '#0fb082', k: '#23b890', i: 'wave', in: 'In 2', eq: 6, fx: [CH, OV, CO, DE], s: [['B 13', 40], ['B 14', -120], ['B 26', 110]], db: '-17.0', y: 535, ri: 1 },
  { n: 'Birds', c: '#08b1a8', k: '#22ccb0', i: 'zoo', in: 'In 2', eq: 7, fx: [CH, PS, CO], g: '5: SFX', db: '-4.8', y: 512, ri: 1 },
  { n: 'Bird Low', c: '#1092b4', k: '#22c4dc', i: 'zoo', in: 'In 2', eq: 8, fx: [CH, PS, CH, 'Gain', 'Gain'], g: '5: SFX', db: '6.0', y: 474, ri: 1 },
  { n: 'Bird High', c: '#1880bb', k: '#3aa8f2', i: 'zoo', in: 'In 2', eq: 8, fx: [CH, PS, 'Chorus', 'Gain'], g: '5: SFX', db: '-1.7', y: 501, ri: 1 },
  { n: 'Bass', c: '#2468ba', k: '#4d98f0', i: 'violin', in: 'In 1', eq: 9, fx: [CH, 'Gate', 'Dist', SV, 'Phat FX', CO, 'Tube EQ', 'Comp ←', 'Exciter'], s: [['B 30', -100]], db: '-14.0', y: 530, ri: 1 },
  { n: 'Guitar Double', c: '#2150b8', k: '#7290f5', i: 'guitar', in: 'In 1', eq: 10, fx: ['Gate', 'Pedals', 'Amp', CH, CO, SV, CH], db: '-10.0', y: 523, ri: 1 },
  { n: 'Bass Drop', c: '#302fb8', k: '#7a78e8', i: 'violin', in: 'In 2', eq: -1, fx: [], db: '-2.7', y: 505, ri: 1, ro: 1 },
  { n: 'Guitar L', c: '#4a2fb9', k: '#9a86f2', i: 'guitar', in: 'In 1', eq: 11, fx: [CO, CH, SV], g: '6: Ac...ic Riff', pan: -43, db: '-3.3', y: 506, ri: 1 },
  { n: 'Guitar R', c: '#6027b9', k: '#aa8af5', i: 'guitar', in: 'In 2', eq: 11, fx: [CO, CH, SV], g: '6: Ac...ic Riff', pan: 30, db: '-3.3', y: 506, ri: 1 },
  { n: 'Guitar', c: '#7a20b2', k: '#8530bd', i: 'guitar', in: 'B 25', st: 1, eq: 12, fx: ['Tremolo', '-' + CH], pan: -1, db: '-2.7', y: 505, picked: 1, right: 1 },
  { n: 'Guitar 1', c: '#9010b0', k: '#dc6cf0', i: 'guitar', in: 'In 2', eq: 13, fx: [...AMP, CH], s: [['Bus 4', -99]], out: 'Bus 25', g: '7: Ac Guitar', pan: -17, db: '-6.7', pk: '-23.2', y: 517, ri: 1, child: 1, live: 1 },
  { n: 'Guitar 2', c: '#b80cae', k: '#f466e6', i: 'guitar', in: 'In 1', eq: 14, fx: AMP, s: [['Bus 4', -99]], out: 'Bus 25', g: '7: Ac Guitar', pan: -23, db: '-12.9', y: 528, ri: 1, child: 1 },
  { n: 'Guitar 3', c: '#c20e88', k: '#f44bac', i: 'guitar', in: 'In 1', eq: 15, fx: AMP, s: [['Bus 4', -99]], out: 'Bus 25', g: '7: Ac Guitar', pan: -64, db: '-15.8', y: 533, ri: 1, child: 1 },
  { n: 'Guitar 4', c: '#960c70', k: '#f5509c', i: 'guitar', in: 'In 1', eq: 13, fx: [...AMP, CH, 'Chorus'], s: [['Bus 4', -50]], out: 'Bus 25', g: '7: Ac Guitar', db: '-22.6', y: 540, ri: 1, child: 1, ro: 1 }
];

/* Each entry: shaded area, response curve. */
const curves = [
  ['M3 9h6l-2 8H3z', 'M7 17L8.500 9.500 12 9l5 .6L20 9h12'],
  ['M3 9h12l-4 8H3z', 'M10 17l3-5 6-1.500 3-2 10-.5'],
  ['M3 9h5v8H3z', 'M3 16Q11 2 14 8l3 3 6-2 4 1 5-4'],
  ['M3 9h8l-3 8H3z', 'M7 17q3-6 8-7.500 9-3 17-.5'],
  ['M3 9h10l-4 8H3z', 'M8 17l4-6 3-1.500 5 2 4-1 2 2 3-4.500 3-.5'],
  ['M24 9l8-4v5z', 'M3 9h16q4 2.500 7 0t6-4'],
  ['M3 9h18l-5 8H3z', 'M15 17q5-6 9-8h8'],
  ['M3 9h8l-4 8H3z', 'M6 17q3-7 5-8h21'],
  ['M3 9h15l-3 8H3z', 'M14 17q3-8 6-8l2-1 1-7 1 7 1 1h6l2 8'],
  ['M3 9h3v8H3z', 'M5 17l1.500-9 6-.5q5 1.500 9 1.500H32'],
  ['M3 9h5l-1 8H3z', 'M6 17l2-6 3-2 4 .5 4-1.500 13 1'],
  ['M3 9h13l-3 8H3z', 'M12 17l5-6 4-3.500 5 1.500 3-2h3'],
  ['M3 10h10v6H3z', 'M13 15V9.500l10-2 9 1.500'],
  ['M3 9h7l-5 8H3z', 'M4 17q4-7 6-8l9 .5 5-.7h8'],
  ['M3 9h9l-5 8H3z', 'M6 17q4-7 7-7.500 5-1 8 0l11-.5'],
  ['M3 9h8l-4 8H3z', 'M7 17q3-7 8-8 6 1 17 2']
];

const use = (id, cls = '') => `<svg class="${cls}"><use href="#${id}"/></svg>`;
const list = (items, fn) => (items || []).map(fn).join('');

function eq(k) {
  if (k < 0) return '<span class="off"></span>';
  return `<svg viewBox="0 0 35 18" preserveAspectRatio="none"${k === 12 ? ' class="grey"' : ''}><path class="area" d="${curves[k][0]}"/><path class="curve" d="${curves[k][1]}"/></svg>`;
}

function arc(cx, cy, r, deg) {
  const a = deg * Math.PI / 180;
  return `M${cx} ${cy - r}A${r} ${r} 0 0 ${deg > 0 ? 1 : 0} ${(cx + r * Math.sin(a)).toFixed(1)} ${(cy - r * Math.cos(a)).toFixed(1)}`;
}

function knob(pan) {
  const set = pan && Math.abs(pan) > 1;
  return `<svg viewBox="0 0 24 24"><path d="M6.500 20.500A10 10 0 1 1 17.500 20.500" fill="none" stroke="#050506" stroke-width="2.500"/><circle cx="12" cy="12" r="8.800" fill="#8b898d"/>` +
    (set ? `<path d="${arc(12, 12, 9.800, pan * 2.340)}" fill="none" stroke="#4fdc5c" stroke-width="2.800"/>` : '<path d="M12 3.500v3" stroke="#2a282c"/>') +
    (pan ? `<text x="12" y="14.500">${pan > 0 ? '+' : ''}${pan}</text>` : '') + '</svg>';
}

function sendRow([name, level]) {
  const col = name === 'Bus 4' ? '#4c78b4' : '#52b95c';
  const big = level ? `<path d="${level > 0 ? 'M2.500 9A4.300 4.300 0 1 1 9.800 5' : level > -70 ? 'M3 9A4.300 4.300 0 0 1 5 1.500' : 'M3.500 9.500A4.300 4.300 0 0 1 1.500 5'}" fill="none" stroke="${col}" stroke-width="1.800"/>` : '';
  return `<div class="send"><button>${name}</button><svg viewBox="0 0 11 11"><circle cx="5.500" cy="5.500" r="5.200" fill="#060608"/><circle cx="5.800" cy="5.500" r="3.400" fill="#98969a"/>${big}</svg></div>`;
}

const majors = [12, 22, 33, 43, 54, 60, 69, 76, 84, 88, 94];
function tickPath(x0, x1, xm) {
  let d = '';
  for (let y = 12; y <= 94; y += 3) d += `M${xm} ${y}.500H${x1}`;
  majors.forEach(y => { d += `M${x0} ${y}.500H${x1}`; });
  return d;
}

function lane(y, live, label) {
  const value = Math.round((548.5 - y) / 75 * 100);
  return `<div class="lane"><svg class="ticks" viewBox="0 0 12 98"><path d="${tickPath(0, 6, 3)}" opacity=".7"/><path class="groove" d="M7.500 10V96"/></svg>` +
    `<input class="fader" type="range" min="0" max="100" value="${value}" aria-label="${label} volume">` +
    `<div class="nums">${list([0, 3, 6, 9, 12, 15, 18, 21, 24, 30, 35, 40, 45, 50, 60], v => `<span>${v}</span>`)}</div>` +
    `<div class="meter">${live ? '<i></i><i></i>' : ''}</div></div>`;
}

function fx(name) {
  const off = name[0] === '-';
  return `<button class="fx${off ? ' off' : ''}">${off ? name.slice(1) : name}</button>`;
}

function group(g) {
  if (!g) return '<button aria-label="Group"></button>';
  return `<button class="set${g.length > 8 ? ' long' : ''}">${g}</button>`;
}

function strip(c) {
  const sends = (c.s || []).map(sendRow);
  while (sends.length < 3) sends.push('<div class="send empty"><span></span><span></span></div>');
  return `<section class="strip${c.picked ? ' picked' : ''}${c.child ? ' child' : ''}">
    <div class="r-gr"><span></span></div>
    <div class="r-eq">${eq(c.eq)}</div>
    <div class="r-midi"></div>
    <div class="r-input"><button class="fmt" aria-label="Format">${use(c.st ? 'i-stereo' : 'i-mono')}</button><button>${c.in}</button></div>
    <div class="r-fx"><div class="slots">${list(c.fx, fx)}</div></div>
    <div class="r-sends">${sends.join('')}</div>
    <div class="r-out"><button>${c.out || 'St Out'}</button></div>
    <div class="r-group">${group(c.g)}</div>
    <div class="r-auto"><button class="read${c.ro ? ' off' : ''}">Read</button></div>
    <div class="r-icon" style="color:${c.k}">${use('t-' + c.i)}</div>
    <div class="r-pan">${knob(c.pan)}</div>
    <div class="r-db"><span>${c.db}</span><span class="peak">${c.pk || ''}</span></div>
    <div class="r-fader">${lane(c.y, c.live, c.n)}</div>
    <div class="r-ri">${c.ri ? '<button>R</button><button>I</button>' : ''}</div>
    <div class="r-ms"><button>M</button><button>S</button></div>
    <div class="r-fold">${c.up ? '<button class="up" aria-label="Fold">' + use('i-chev') + '</button>' : ''}${c.right ? '<button aria-label="Unfold">' + use('i-chev') + '</button>' : ''}</div>
    <div class="r-name" style="background:${c.c}">${c.n}</div>
  </section>`;
}

document.getElementById('strips').innerHTML = list(channels, strip);

document.getElementById('scale').innerHTML =
  `<svg class="outer" viewBox="0 0 54 98"><path d="${tickPath(46, 54, 49)}" opacity=".7"/>` +
  list([6, 3, 0, 3, 6, 10, 15, 20, 30, 40, '∞'], (v, k) => `<text x="44" y="${majors[k] + 2}">${v}</text>`) + '</svg>';

function duo(c) {
  return `<section class="chan">
    <button class="setting">Setting</button><div class="gr"></div>
    <div class="eqbox">${c.eq ? eq(12) : '<button class="noeq">EQ</button>'}</div>
    <div class="c-input">${use('i-stereo')}${c.in ? `<button>${c.in}</button>` : ''}</div>
    <div class="c-fx">${list(c.fx, fx)}${c.master ? '<button class="master">Mastering</button>' : ''}</div>
    <div class="c-row c-sends">${c.out ? 'Sends' : ''}</div>
    <div class="c-row c-out">${c.out || ''}</div>
    <div class="c-row"><button class="faint">Group</button></div>
    <div class="c-row"><button class="read${c.ro ? ' off' : ''}">Read</button></div>
    <div class="r-pan">${knob(c.pan)}</div>
    <div class="r-db"><span>${c.db}</span><span></span></div>
    <div class="r-fader">${lane(c.y, 0, c.n)}</div>
    <div class="c-bnc">${c.bnc || ''}</div>
    <div class="r-ms"><button>M</button><button>S</button></div>
    <div class="c-name">${c.n}</div>
  </section>`;
}
document.getElementById('duo').innerHTML =
  duo({ n: 'Guitar', eq: 1, in: 'Bus 25', fx: ['Tremolo', '-Channel EQ'], out: 'Stereo Out', pan: -1, db: '-2.7', y: 505 }) +
  duo({ n: 'Stereo Out', fx: ['Limiter'], master: 1, ro: 1, db: '0.0', y: 495, bnc: 'Bnc' });

/* Ruler, chord track and the first visible lane of regions */
const bars = [[29, 9], [103, 17], [173, 25], [247, 33], [386, 49], [459, 57], [533, 65], [609, 73], [684, 81]];
const tempos = [116, 316, 358];
const chords = [[2, '5'], [13, 'B♭'], [50, 'B♭'], [69, 'A♭'], [88, 'B♭'], [128, 'B♭5'], [165, 'B♭5'], [203, 'B♭'], [240, 'B♭'], [259, 'A♭'], [276, 'B♭5'], [328, 'B♭add 9'], [369, 'A...'], [388, 'F7...'], [406, 'E♭6('], [425, 'B♭...'], [444, 'A...'], [462, 'F7...'], [481, 'E♭6('], [537, 'B♭'], [556, 'A♭'], [574, 'B♭'], [593, 'A♭'], [648, 'B♭5']];
let t = '<rect width="708" height="13" fill="#232225"/><rect y="12" width="684" height="10" class="blk"/>';
for (let x = 10; x < 708; x += 9) t += `<path d="M${x}.500 22V36" stroke="#1d1b1f"/>`;
[38, 44, 108, 111, 114, 148, 155, 186, 192, 225, 296, 299, 302, 305, 308, 383, 506, 510, 515, 520, 523, 526, 620, 630, 638, 643, 670, 674, 679].forEach(x => { t += `<path d="M${x}.500 14v7" stroke="#77747b"/>`; });
[28, 102, 125, 163, 199, 237, 274, 324, 386, 422, 459, 533, 570, 609].forEach(x => { t += `<path d="M${x}.500 12v10" stroke="#19171b"/>`; });
t += list(bars, ([x, v]) => `<path class="line" d="M${x}.500 2v10"/><text x="${x + 2}" y="8">${v}</text>`);
t += list(tempos, x => `<text class="tempo-mark" x="${x}" y="9">24</text>`);
t += list(chords, ([x, v]) => `<text class="chord" x="${x}" y="20">${v}</text>`);
t += '<text class="chord" x="686" y="20" opacity=".45">F♯5</text>';
[[9, 5], [29, 5], [94, 4], [103, 4], [200, 4], [219, 4], [247, 4], [256, 4], [284, 4], [294, 4], [326, 170], [544, 4], [553, 4], [656, 4], [665, 4]].forEach(([x, w]) => { t += `<rect x="${x}" y="33" width="${w}" height="2" fill="#3b9f94"/>`; });
t += '<rect x="688" y="23" width="16" height="8" rx="2" fill="#1faf83"/>';
document.getElementById('timeline').innerHTML = t;
```
